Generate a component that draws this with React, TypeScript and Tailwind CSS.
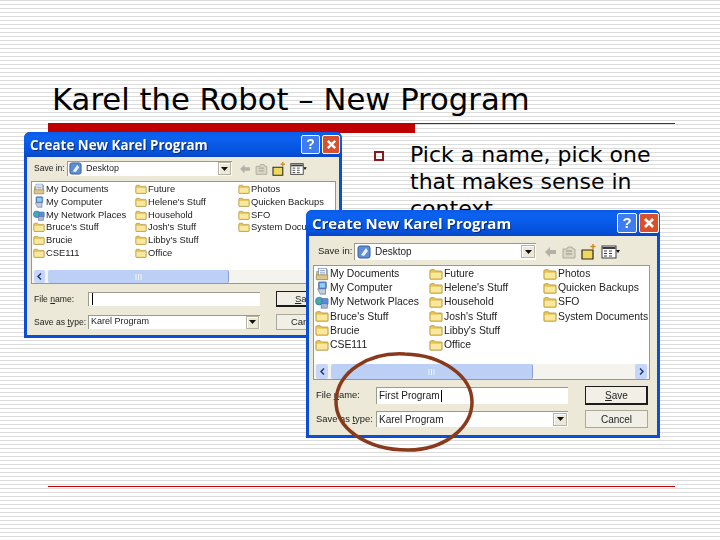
import { ReactNode } from 'react'

const files = [
  ['doc', 'My Documents'], ['folder', 'Future'], ['folder', 'Photos'],
  ['pc', 'My Computer'], ['folder', "Helene's Stuff"], ['folder', 'Quicken Backups'],
  ['net', 'My Network Places'], ['folder', 'Household'], ['folder', 'SFO'],
  ['folder', "Bruce's Stuff"], ['folder', "Josh's Stuff"], ['folder', 'System Documents'],
  ['folder', 'Brucie'], ['folder', "Libby's Stuff"], null,
  ['folder', 'CSE111'], ['folder', 'Office'], null,
]

function FileIcon({ kind, size }: { kind: string; size: number }) {
  if (kind === 'doc') {
    return (
      <svg width={size} height={size} viewBox="0 0 16 16" className="shrink-0">
        <path d="M2 5h3l1-2h8v11H2z" fill="#e8c860" stroke="#9a8440" strokeWidth="0.8" />
        <rect x="4" y="1.5" width="9" height="9" fill="#fff" stroke="#6a86b8" strokeWidth="0.8" />
        <path d="M5.5 4h6M5.5 6h6M5.5 8h6" stroke="#6a86b8" strokeWidth="0.8" />
        <path d="M1.5 9h13v5.5h-13z" fill="#d8c890" stroke="#9a8440" strokeWidth="0.8" />
      </svg>
    )
  }
  if (kind === 'pc') {
    return (
      <svg width={size} height={size} viewBox="0 0 16 16" className="shrink-0">
        <rect x="4" y="1" width="9" height="8" rx="1" fill="#4f8ae0" stroke="#5a6a90" strokeWidth="0.8" />
        <rect x="5.5" y="2.5" width="6" height="5" fill="#8fd0f8" />
        <path d="M3 9l3 6h6V9z" fill="#c4cde0" stroke="#6a7694" strokeWidth="0.8" />
      </svg>
    )
  }
  if (kind === 'net') {
    return (
      <svg width={size} height={size} viewBox="0 0 16 16" className="shrink-0">
        <circle cx="5" cy="7" r="4.5" fill="#3aa0d8" stroke="#246a98" strokeWidth="0.6" />
        <path d="M2 6c2-2 3 0 4 1s-1 3-2 2z" fill="#58b858" />
        <rect x="8" y="4" width="7" height="7" rx="1" fill="#5a8ae0" stroke="#56688e" strokeWidth="0.7" />
        <rect x="7" y="10" width="7" height="5" fill="#a8b8d8" stroke="#56688e" strokeWidth="0.7" />
      </svg>
    )
  }
  return (
    <svg width={size} height={size} viewBox="0 0 16 16" className="shrink-0">
      <path d="M1 4.5C1 3.5 2 3 3 3h3l1.2 1.5H14c.7 0 1 .5 1 1V13c0 .6-.4 1-1 1H2c-.6 0-1-.4-1-1z" fill="#e9c44e" stroke="#a08a38" strokeWidth="0.8" />
      <path d="M2 6.5h12V13H2z" fill="#f8e8a0" />
    </svg>
  )
}

function ToolIcons({ w, h }: { w: number; h: number }) {
  return (
    <svg width={w} height={h} viewBox="0 0 76 18" className="shrink-0">
      <path d="M1 9l5-5v3h6v4H6v3z" fill="#b4b2a8" />
      <path d="M19 6h4l1-2h4l1 2h2v9H19z" fill="#d8d6c4" stroke="#aeac9c" strokeWidth="1" />
      <path d="M22 8h6M22 11h6" stroke="#aeac9c" strokeWidth="1.4" />
      <path d="M38 7h11v9H38z" fill="#f0d860" stroke="#2c2c1c" strokeWidth="1.2" />
      <path d="M49 1v5M46.5 3.5h5" stroke="#d08818" strokeWidth="1.4" />
      <rect x="58" y="3" width="14" height="12" fill="#fff" stroke="#3a3a3a" strokeWidth="1" />
      <path d="M58.5 5h13" stroke="#3a3a3a" strokeWidth="2" />
      <path d="M60 8h3M65 8h3M60 10.5h3M65 10.5h3M60 13h3M65 13h3" stroke="#3a3a3a" strokeWidth="1" />
      <path d="M72 7h4l-2 3z" fill="#111" />
    </svg>
  )
}

function DropArrow({ cls }: { cls: string }) {
  return (
    <div className={`flex items-center justify-center bg-[#ece9d8] border border-[#b8b4a4] shadow-[inset_1px_1px_0_#fff] ${cls}`}>
      <svg width="7" height="4" viewBox="0 0 7 4"><path d="M0 0h7L3.5 4z" fill="#111" /></svg>
    </div>
  )
}

type Sizes = {
  frame: string; bar: string; title: string; help: string; close: string; xIcon: number
  body: string; toolbar: string; label: string; combo: string; comboIcon: number
  tools: string; toolW: number; toolH: number
  list: string; grid: string; iconSize: number; item: string; scroll: string; sbBtn: string; thumb: string; rightBtn: string
  row1: string; row2: string; formLabel: string; field: string; arrow: string; btnGap: string; save: string; cancel: string
}

const small: Sizes = {
  frame: 'left-[24px] top-[132px] w-[318px] h-[206px]',
  bar: 'h-[25px] pl-[3px] pr-[2px]', title: 'text-[13.4px]',
  help: 'w-[19px] h-[19px] text-[14px]', close: 'w-[18px] h-[19px] ml-[2px]', xIcon: 11,
  body: 'pl-[4px] pr-[3px] pt-[4px] pb-[5px]', toolbar: 'h-[15px]', label: 'w-[36px] pl-[3px] text-[8.5px]',
  combo: 'w-[165px] text-[9px] pl-[2px]', comboIcon: 13,
  tools: 'ml-[7px]', toolW: 68, toolH: 16,
  list: 'mt-[5px] h-[103px]', grid: 'grid-cols-[102px_103px_1fr] pl-[1px] pt-[1px] auto-rows-[12.7px]', iconSize: 12, item: 'text-[9.4px] gap-[1px]',
  scroll: 'h-[13px] px-[2px]', sbBtn: 'w-[11px] mr-[3px]', thumb: 'w-[181px]', rightBtn: 'w-[11px]',
  row1: 'mt-[7px] h-[16px]', row2: 'mt-[7px] h-[16px]', formLabel: 'text-[8.6px]', field: 'w-[173px] ml-[57px] text-[9px]', arrow: 'w-[13px] h-[13px]',
  btnGap: 'ml-[16px]', save: 'w-[61px] text-[9.5px]', cancel: 'w-[61px] text-[9.5px]',
}

const large: Sizes = {
  frame: 'left-[306px] top-[210px] w-[354px] h-[228px]',
  bar: 'h-[26px] pl-[3px] pr-[1px]', title: 'text-[15px]',
  help: 'w-[20px] h-[20px] text-[15px]', close: 'w-[20px] h-[20px] ml-[2px]', xIcon: 12,
  body: 'pl-[4px] pr-[7px] pt-[7px] pb-[7px]', toolbar: 'h-[17px]', label: 'w-[41px] pl-[5px] text-[9.5px]',
  combo: 'w-[182px] text-[10px] pl-[3px]', comboIcon: 14,
  tools: 'ml-[8px]', toolW: 76, toolH: 18,
  list: 'mt-[5px] h-[115px]', grid: 'grid-cols-[114px_114px_1fr] pl-[1px] pt-[1px] auto-rows-[14.1px]', iconSize: 14, item: 'text-[10.4px] gap-[1px]',
  scroll: 'h-[15px] px-[2px]', sbBtn: 'w-[12px] mr-[3px]', thumb: 'w-[202px]', rightBtn: 'w-[12px]',
  row1: 'mt-[6px] h-[19px]', row2: 'mt-[5px] h-[18px]', formLabel: 'text-[9.4px]', field: 'w-[192px] ml-[63px] text-[10px]', arrow: 'w-[14px] h-[13px]',
  btnGap: 'ml-[17px]', save: 'w-[63px] text-[10px]', cancel: 'w-[63px] text-[10px]',
}

function FormRow({ s, rowCls, label, children, button }: { s: Sizes; rowCls: string; label: ReactNode; children: ReactNode; button: ReactNode }) {
  return (
    <div className={`relative flex items-stretch ${rowCls}`}>
      <div className={`absolute left-[3px] top-0 bottom-0 flex items-center whitespace-nowrap text-[#222] ${s.formLabel}`}>{label}</div>
      <div className={`flex items-center justify-between bg-white my-[1px] pl-[3px] pr-[1px] shadow-[inset_1px_1px_0_#9c9a8c] ${s.field}`}>{children}</div>
      {button}
    </div>
  )
}

function Dialog({ s, fileName }: { s: Sizes; fileName: string }) {
  return (
    <div className={`absolute flex flex-col rounded-t-[6px] bg-[#0a4fd6] px-[3px] pb-[3px] blur-[0.35px] font-['Liberation_Sans',sans-serif] ${s.frame}`}>
      <div className={`flex items-center shrink-0 -mx-[3px] rounded-t-[6px] bg-[linear-gradient(to_bottom,#0a5ae6,#0c62f0_20%,#0452dc_80%,#0a46c4)] ${s.bar}`}>
        <span className={`flex-1 pl-[3px] pt-[1px] text-white font-bold font-['Open_Sans',sans-serif] [text-shadow:1px_1px_0_#0a2a80] whitespace-nowrap ${s.title}`}>Create New Karel Program</span>
        <div className={`flex items-center justify-center rounded-[2px] border border-white bg-[#3f7cf0] text-white font-bold ${s.help}`}>?</div>
        <div className={`flex items-center justify-center rounded-[2px] border border-white bg-[#d8502c] ${s.close}`}>
          <svg width={s.xIcon} height={s.xIcon} viewBox="0 0 12 12"><path d="M2 2l8 8M10 2l-8 8" stroke="#fff" strokeWidth="2.6" /></svg>
        </div>
      </div>
      <div className={`flex flex-1 flex-col bg-[#ece9d8] text-[#222] ${s.body}`}>
        <div className={`flex items-center shrink-0 ${s.toolbar}`}>
          <span className={`shrink-0 whitespace-nowrap ${s.label}`}>Save in:</span>
          <div className={`flex h-full items-center gap-[4px] bg-white pr-[1px] shadow-[inset_1px_1px_0_#9c9a8c] ${s.combo}`}>
            <svg width={s.comboIcon} height={s.comboIcon} viewBox="0 0 14 14" className="shrink-0">
              <rect x="1" y="1" width="12" height="12" rx="2" fill="#5c8ed8" stroke="#3c5c98" />
              <path d="M4 10l5-7 2 3-4 5z" fill="#e8f0fa" />
            </svg>
            <span className="flex-1">Desktop</span>
            <DropArrow cls={s.arrow} />
          </div>
          <div className={s.tools}><ToolIcons w={s.toolW} h={s.toolH} /></div>
        </div>
        <div className={`flex flex-col bg-white border border-[#7f9db9] shrink-0 ${s.list}`}>
          <div className={`grid flex-1 content-start overflow-hidden ${s.grid}`}>
            {files.map((f, i) =>
              f ? (
                <div key={i} className={`flex items-center whitespace-nowrap ${s.item}`}>
                  <FileIcon kind={f[0]} size={s.iconSize} />
                  <span>{f[1]}</span>
                </div>
              ) : (
                <div key={i} />
              ),
            )}
          </div>
          <div className={`flex items-stretch shrink-0 bg-[#f4f3ee] ${s.scroll}`}>
            <div className={`flex items-center justify-center rounded-[2px] bg-[#c5d6f8] ${s.sbBtn}`}>
              <svg width="5" height="7" viewBox="0 0 5 7"><path d="M4 0.5L1 3.5l3 3" fill="none" stroke="#1a2f78" strokeWidth="1.4" /></svg>
            </div>
            <div className={`flex items-center justify-center rounded-[2px] bg-[#bcd0f6] border-r border-[#8aa2d8] ${s.thumb}`}>
              <svg width="7" height="6" viewBox="0 0 7 6"><path d="M1 0v6M3.5 0v6M6 0v6" stroke="#f0f4fc" strokeWidth="1" /></svg>
            </div>
            <div className="flex-1" />
            <div className={`flex items-center justify-center rounded-[2px] bg-[#c5d6f8] ${s.rightBtn}`}>
              <svg width="5" height="7" viewBox="0 0 5 7"><path d="M1 0.5L4 3.5l-3 3" fill="none" stroke="#1a2f78" strokeWidth="1.4" /></svg>
            </div>
          </div>
        </div>
        <FormRow
          s={s}
          rowCls={s.row1}
          label={<span>File <u>n</u>ame:</span>}
          button={<div className={`flex items-center justify-center border border-[#1c1c1c] bg-[#f2f0e6] shadow-[inset_-1px_-1px_0_#1c1c1c] ${s.btnGap} ${s.save}`}><span><u>S</u>ave</span></div>}
        >
          <span className="flex items-center">{fileName}<span className="inline-block w-[1px] h-[12px] bg-black ml-[1px]" /></span>
        </FormRow>
        <FormRow
          s={s}
          rowCls={s.row2}
          label={<span>Save as <u>t</u>ype:</span>}
          button={<div className={`flex items-center justify-center border border-[#aaa89a] bg-[#f2f0e6] ${s.btnGap} ${s.cancel}`}>Cancel</div>}
        >
          <span>Karel Program</span>
          <DropArrow cls={s.arrow} />
        </FormRow>
      </div>
    </div>
  )
}

export default function App() {
  return (
    <div className="relative w-[720px] h-[540px] overflow-hidden bg-[repeating-linear-gradient(to_bottom,#dcdcdc_0,#dcdcdc_1px,#ffffff_1px,#ffffff_4px)] font-['DejaVu_Sans',sans-serif] text-black">
      <h1 className="ml-[52px] pt-[81px] h-[123px] text-[30.7px] leading-[38px] whitespace-nowrap">Karel the Robot – New Program</h1>
      <div className="flex items-start ml-[48px] w-[627px]">
        <div className="w-[367px] h-[10px] bg-[#c00000]" />
        <div className="flex-1 h-[1px] bg-[#c00000]" />
      </div>
      <div className="flex items-start mt-[8px] ml-[374px]">
        <div className="mt-[10px] w-[10px] h-[10px] border-2 border-[#8b1a1a] shrink-0" />
        <p className="ml-[26px] w-[250px] text-[22px] leading-[27px]">Pick a name, pick one that makes sense in context</p>
      </div>
      <Dialog s={small} fileName="" />
      <Dialog s={large} fileName="First Program" />
      <svg width="150" height="106" viewBox="0 0 150 106" className="absolute left-[330px] top-[350px]">
        <path d="M75 4C38 2 8 22 6 50c-1 28 30 50 72 50 36 0 64-22 64-48C142 26 112 5 75 4z" fill="none" stroke="#8a3a1c" strokeWidth="3.5" />
      </svg>
      <div className="absolute left-[48px] top-[486px] w-[627px] h-[1px] bg-[#c00000]" />
    </div>
  )
}
